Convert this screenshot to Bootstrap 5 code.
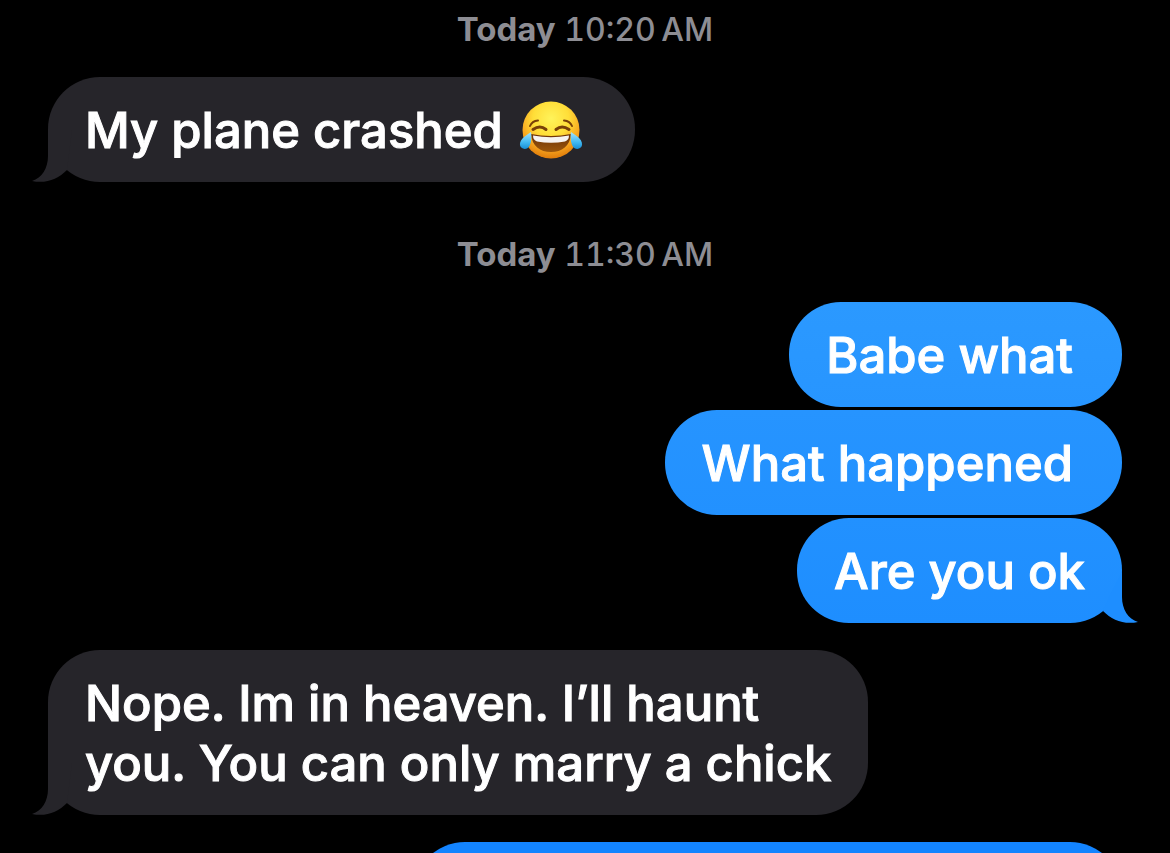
<!DOCTYPE html>
<html lang="en">
<head>
<meta charset="utf-8">
<meta name="viewport" content="width=device-width, initial-scale=1">
<title>Messages</title>
<link rel="stylesheet" href="https://cdn.jsdelivr.net/npm/bootstrap@5.3.0/dist/css/bootstrap.min.css">
<style>
html, body { height: 100%; }
body { background: #000; color: #fff; font-family: Inter, "Liberation Sans", sans-serif; }
.chat { padding: 8px 48px 0; }
.chat > * { flex-shrink: 0; }
.stamp { color: #8d8d93; font-size: 32px; line-height: 44px; font-weight: 500; font-variant-numeric: tabular-nums; margin-bottom: 25px; }
.stamp b { font-size: 33px; line-height: 1; font-weight: 700; }
.stamp.later { margin-top: 51px; }
.bubble { position: relative; border-radius: 52px; padding: 24px 37px 21px; min-height: 105px; font-size: 49px; line-height: 60px; font-weight: 500; -webkit-text-stroke: 1px currentColor; }
.received { background: #26252a; color: #fff; --tail: #26252a; }
.sent-1 { background: linear-gradient(#2b99ff, #2795ff); }
.sent-2 { background: linear-gradient(#2694ff, #2291ff); }
.sent-3 { background: linear-gradient(#2291ff, #1e8eff); --tail: #1e8eff; }
.sent-4 { background: #1384ff; width: 66%; }
.untailed { padding-right: 49px; }
.emoji { width: 64px; height: 60px; margin-right: 3px; }
.tail { position: absolute; bottom: 0; width: 40px; height: 52px; fill: var(--tail); }
.tail-left { left: -16px; }
.tail-right { right: -16px; }
.stack { gap: 3px; }
.turn { margin-top: 27px; }
</style>
</head>
<body>
<main class="chat container-fluid d-flex flex-column vh-100 overflow-hidden">
  <div class="stamp text-center"><b>Today</b> 10:20&#8239;AM</div>
  <div class="bubble received untailed align-self-start d-flex align-items-center gap-3">
    <svg class="tail tail-left" viewBox="0 0 40 52" aria-hidden="true"><path d="M16 0V26C16 38 10 48 0 51C14 54 26 49 35 40L40 0Z"/></svg>
    <span>My plane crashed</span>
    <svg class="emoji" viewBox="0 0 64 60" role="img" aria-label="Face with tears of joy">
      <defs>
        <radialGradient id="face" cx=".5" cy=".3" r=".7"><stop offset="0" stop-color="#fff35a"/><stop offset=".45" stop-color="#ffde38"/><stop offset=".75" stop-color="#f8a921"/><stop offset="1" stop-color="#e07c0b"/></radialGradient>
        <linearGradient id="mouth" x2="0" y2="1"><stop offset="0" stop-color="#6b3208"/><stop offset="1" stop-color="#9c570c"/></linearGradient>
        <linearGradient id="tear" x2="0" y2="1"><stop offset="0" stop-color="#a5e5ff"/><stop offset=".6" stop-color="#42b9f2"/><stop offset="1" stop-color="#168ed6"/></linearGradient>
      </defs>
      <circle cx="32" cy="29" r="28.500" fill="url(#face)"/>
      <g fill="none" stroke="#794008" stroke-linecap="round">
        <path stroke-width="2" d="M11 25Q13 20 19 19.500M53 25Q51 20 45 19.500"/>
        <path stroke-width="3" d="M14 28.500Q21 23.500 27 28.500M37 28.500Q43 23.500 50 28.500"/>
      </g>
      <path fill="url(#mouth)" d="M12 33Q32 37 52 33C51 45 43 51 32 51S13 45 12 33Z"/>
      <path fill="#f6f3f1" d="M14 34.500Q32 38 50 34.500Q50 39 46 40.500Q32 43 18 40.500Q14 39 14 34.500Z"/>
      <path fill="url(#tear)" d="M12 31C13 38 12 48 5.500 48C-1 47 0 40 5 36Q9 33 12 31Z"/>
      <path fill="url(#tear)" d="M52 31C51 38 52 48 58.500 48C65 47 64 40 59 36Q55 33 52 31Z"/>
    </svg>
  </div>
  <div class="stamp later text-center"><b>Today</b> 11:30&#8239;AM</div>
  <div class="stack d-flex flex-column align-items-end">
    <div class="bubble sent-1 untailed">Babe what</div>
    <div class="bubble sent-2 untailed">What happened</div>
    <div class="bubble sent-3">
      <svg class="tail tail-right" viewBox="0 0 40 52" aria-hidden="true"><path d="M24 0V26C24 38 30 48 40 51C26 54 14 49 5 40L14 20Z"/></svg>Are you ok</div>
  </div>
  <div class="bubble received turn align-self-start">
    <svg class="tail tail-left" viewBox="0 0 40 52" aria-hidden="true"><path d="M16 0V26C16 38 10 48 0 51C14 54 26 49 35 40L40 0Z"/></svg>Nope. Im in heaven. I’ll haunt<br>you. You can only marry a chick</div>
  <div class="bubble sent-4 turn align-self-end"></div>
</main>
<script src="https://cdn.jsdelivr.net/npm/bootstrap@5.3.0/dist/js/bootstrap.bundle.min.js"></script>
</body>
</html>
